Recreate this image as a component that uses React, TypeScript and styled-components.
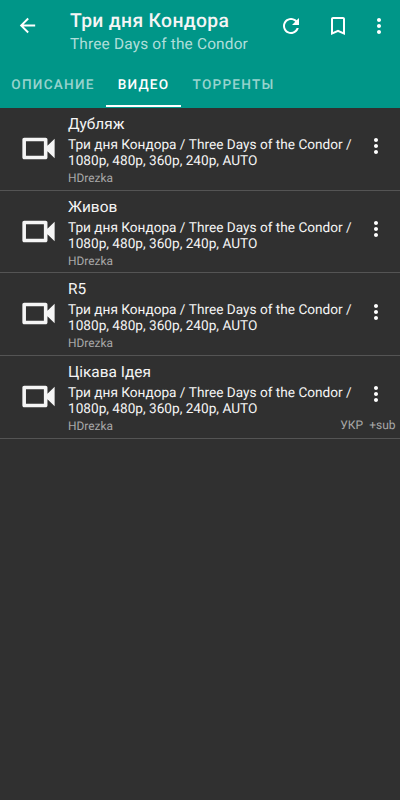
import React from 'react';
import styled, { createGlobalStyle } from 'styled-components';

const GlobalStyle = createGlobalStyle`
  * { box-sizing: border-box; }
  body {
    margin: 0;
    background: #303030;
    font-family: Roboto, sans-serif;
    text-rendering: geometricPrecision;
  }
`;

const Screen = styled.div`
  width: 400px;
  min-height: 800px;
  background: #303030;
  color: #f5f5f5;
  overflow: hidden;
`;

const Header = styled.header`
  height: 107.600px;
  background: #009688;
`;

const Toolbar = styled.div`
  height: 63px;
  display: flex;
  align-items: flex-start;
  padding: 0 11.500px 0 17.500px;
`;

const IconButton = styled.button<{ $ml?: number }>`
  width: 20px;
  height: 20px;
  margin: 15.500px 0 0 ${(p) => p.$ml ?? 0}px;
  padding: 0;
  border: 0;
  background: none;
  color: #fff;
  display: flex;
  align-items: center;
  justify-content: center;
  flex: none;

  svg {
    flex: none;
  }
`;

const Titles = styled.div`
  flex: 1;
  min-width: 0;
  padding: 9px 0 0 32.500px;
  white-space: nowrap;
`;

const Title = styled.h1`
  margin: 0;
  font-size: 19.300px;
  line-height: 23px;
  font-weight: 500;
  letter-spacing: 0.35px;
`;

const Subtitle = styled.div`
  font-size: 15.400px;
  line-height: 24px;
  letter-spacing: 0.18px;
  color: rgba(255, 255, 255, 0.7);
`;

const Tabs = styled.nav`
  display: flex;
  height: 44px;
`;

const Tab = styled.div<{ $active?: boolean; $width: number }>`
  width: ${(p) => p.$width}px;
  display: flex;
  align-items: center;
  justify-content: center;
  padding-top: 1.500px;
  font-size: 13.600px;
  font-weight: 500;
  letter-spacing: 1.23px;
  color: ${(p) => (p.$active ? '#fff' : 'rgba(255,255,255,0.6)')};
  border-bottom: 2px solid ${(p) => (p.$active ? '#fff' : 'transparent')};
`;

const List = styled.main`
  padding-top: 0.600px;
`;

const Row = styled.article`
  height: 82.600px;
  display: flex;
  border-bottom: 1px solid #545454;
`;

const Thumb = styled.div`
  width: 68px;
  padding: 19px 0 0 17.200px;
  flex: none;
`;

const Body = styled.div`
  flex: 1;
  min-width: 0;
  padding-top: 4.800px;
  white-space: nowrap;
`;

const Name = styled.div`
  font-size: 15.400px;
  line-height: 22px;
`;

const Detail = styled.div`
  font-size: 13.630px;
  line-height: 16px;
  padding-top: 2px;
`;

const Source = styled.div`
  font-size: 11.900px;
  line-height: 16px;
  padding-top: 1px;
  color: #a8a8a8;
`;

const Side = styled.div`
  width: 60px;
  flex: none;
  display: flex;
  flex-direction: column;
  align-items: flex-end;
  padding: 28.200px 4.500px 0 0;
`;

const MoreButton = styled(IconButton)`
  margin: 0 10px 0 0;
`;

const Tags = styled.div`
  display: flex;
  gap: 6px;
  margin-top: 13.300px;
  font-size: 12px;
  line-height: 16px;
  color: #a8a8a8;
  white-space: nowrap;
`;

const Icon = ({ d, size = 24 }: { d: string; size?: number }) => (
  <svg width={size} height={size} viewBox="0 0 24 24" fill="currentColor">
    <path d={d} />
  </svg>
);

const BACK = 'M20 11H7.83l5.590-5.590L12 4l-8 8 8 8 1.410-1.410L7.830 13H20v-2z';
const REFRESH =
  'M17.650 6.350C16.200 4.900 14.210 4 12 4c-4.420 0-7.990 3.580-7.990 8s3.570 8 7.990 8c3.730 0 6.840-2.550 7.730-6h-2.080c-.82 2.330-3.040 4-5.650 4-3.310 0-6-2.690-6-6s2.690-6 6-6c1.660 0 3.140.69 4.220 1.780L13 11h7V4l-2.350 2.350z';
const BOOKMARK =
  'M17 3H7c-1.100 0-1.990.9-1.990 2L5 21l7-3 7 3V5c0-1.100-.9-2-2-2zm0 15l-5-2.180L7 18V5h10v13z';
const CAMERA =
  'M15 8v8H5V8h10m1-2H4c-.55 0-1 .45-1 1v10c0 .55.45 1 1 1h12c.55 0 1-.45 1-1v-3.500l4 4v-11l-4 4V7c0-.55-.45-1-1-1z';
const DOTS =
  'M12 8c1.100 0 2-.9 2-2s-.9-2-2-2-2 .9-2 2 .9 2 2 2zm0 2c-1.100 0-2 .9-2 2s.9 2 2 2 2-.9 2-2-.9-2-2-2zm0 6c-1.100 0-2 .9-2 2s.9 2 2 2 2-.9 2-2-.9-2-2-2z';

const items: { name: string; tags: string[] }[] = [
  { name: 'Дубляж', tags: [] },
  { name: 'Живов', tags: [] },
  { name: 'R5', tags: [] },
  { name: 'Цікава Ідея', tags: ['УКР', '+sub'] },
];

export default function App() {
  return (
    <Screen>
      <GlobalStyle />
      <Header>
        <Toolbar>
          <IconButton aria-label="Назад"><Icon d={BACK} size={23} /></IconButton>
          <Titles>
            <Title>Три дня Кондора</Title>
            <Subtitle>Three Days of the Condor</Subtitle>
          </Titles>
          <IconButton aria-label="Обновить"><Icon d={REFRESH} /></IconButton>
          <IconButton $ml={26.5} aria-label="Закладка"><Icon d={BOOKMARK} /></IconButton>
          <IconButton $ml={21} aria-label="Ещё"><Icon d={DOTS} /></IconButton>
        </Toolbar>
        <Tabs>
          <Tab $width={106}>ОПИСАНИЕ</Tab>
          <Tab $width={75} $active>ВИДЕО</Tab>
          <Tab $width={105}>ТОРРЕНТЫ</Tab>
        </Tabs>
      </Header>
      <List>
        {items.map((item) => (
          <Row key={item.name}>
            <Thumb><Icon d={CAMERA} size={43} /></Thumb>
            <Body>
              <Name>{item.name}</Name>
              <Detail>
                Три дня Кондора / Three Days of the Condor /<br />
                1080p, 480p, 360p, 240p, AUTO
              </Detail>
              <Source>HDrezka</Source>
            </Body>
            <Side>
              <MoreButton aria-label="Ещё"><Icon d={DOTS} /></MoreButton>
              <Tags>
                {item.tags.map((tag) => <span key={tag}>{tag}</span>)}
              </Tags>
            </Side>
          </Row>
        ))}
      </List>
    </Screen>
  );
}
